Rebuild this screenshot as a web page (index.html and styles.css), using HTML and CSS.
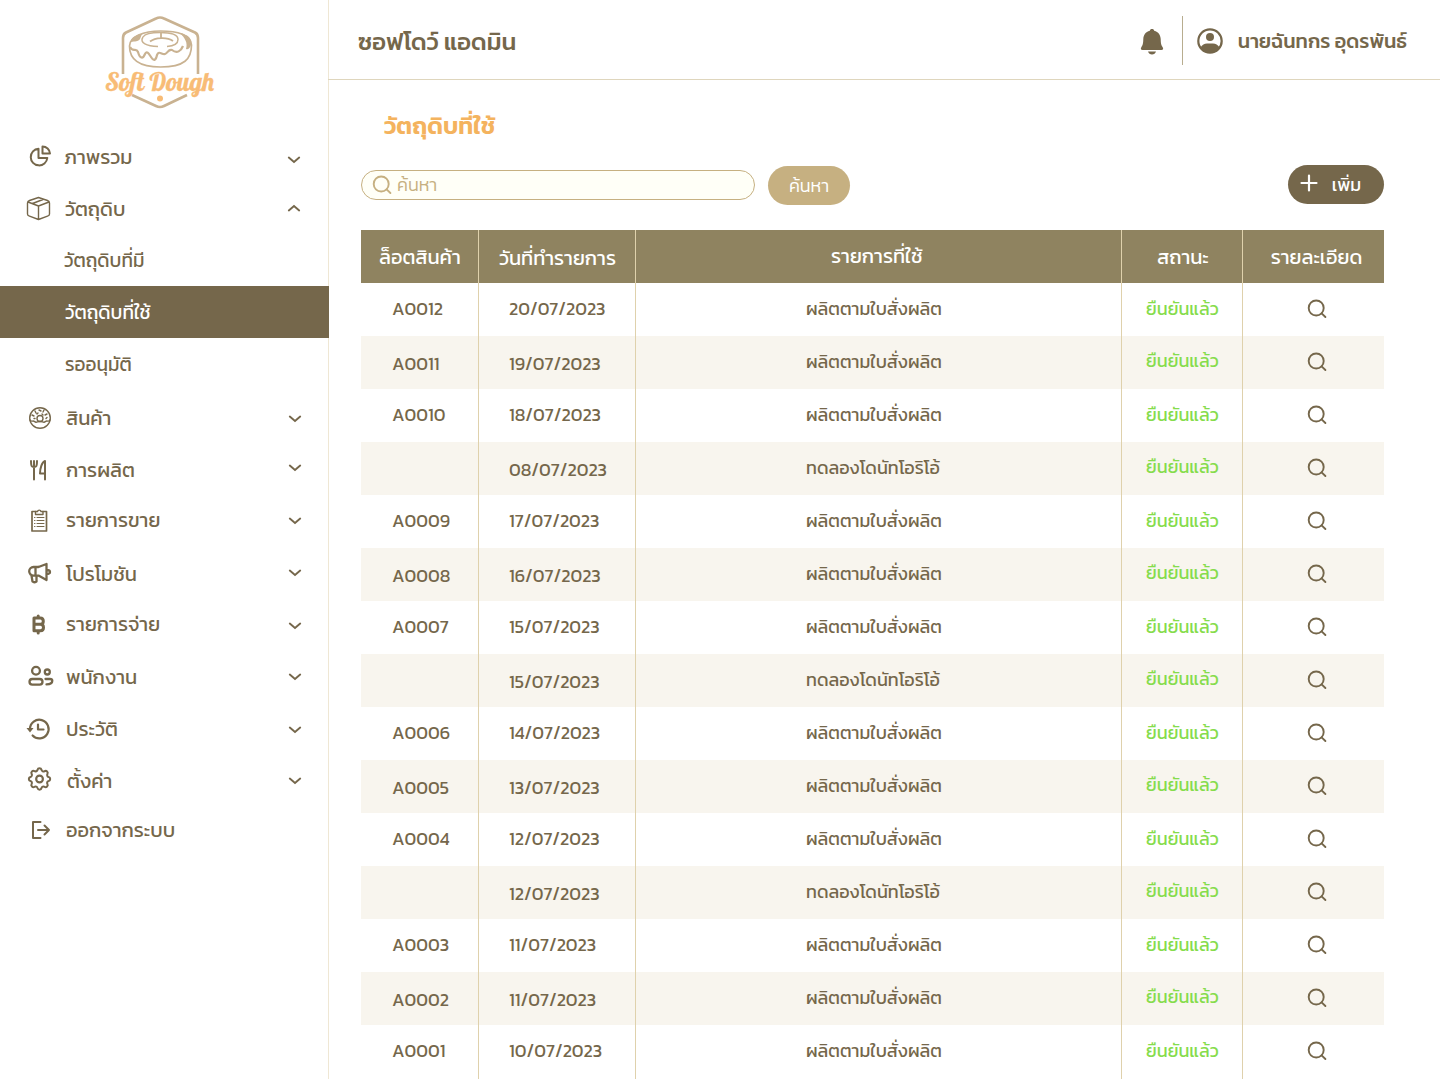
FILE: index.html
```html
<!DOCTYPE html>
<html lang="th">
<head>
<meta charset="utf-8">
<title>ซอฟโดว์ แอดมิน</title>
<link rel="stylesheet" href="styles.css">
</head>
<body>
<svg class="symbols" aria-hidden="true">
  <symbol id="chevron" viewBox="0 0 14 8"><path d="M1.800 1.600 7 6l5.200-4.400" /></symbol>
  <symbol id="search" viewBox="0 0 20 20"><circle cx="9.200" cy="9" r="7.500"/><path d="m14.600 14.400 3.800 3.600"/></symbol>
</svg>
<div class="app">
  <aside class="sidebar">
    <svg class="logo" viewBox="0 0 120 104">
      <g fill="none" stroke="#c9b291" stroke-width="2.600">
        <path d="M23 61V25q0-4 3-5.500L56 5.500q4-2 8 0l31 14q3 1.500 3 5.500v36"/>
        <path d="M32 82 56 93q4 2 8 0l23-11"/>
        <path stroke-width="1.700" d="M29.500 33c0-9 14-15 31-15s31 4 31 14c0 14-7 22-31 22-22 0-31-8-31-21Z"/>
        <path stroke-width="2.200" d="M30 34c3 6 6 0 8 5 2 7 5 7 7 2 2-4 4 0 6 3 3 5 5 3 6-2 2-5 5 0 8-1s3-5 7-4c5 4 9 1 11-4"/>
        <path stroke-width="1.500" d="M43 24c-4 6 4 9 15 9.500M67 33.500c7-.5 11-2.500 11-7 0-6-9-7-18-7-8 0-15 1-17 4.500"/>
        <path stroke-width="1.800" d="M50 28.500c5-4 17-5 23-.5M61 19v6"/>
      </g>
      <path fill="#c9b291" d="M80 20c9 2 12 6 11 12-1 3-3 5-5 4 2-6-1-11-6-16ZM42 21c-7 1-11 4-11 8 4-1 7 0 9-3Z"/>
      <text x="59.500" y="78" textLength="109" lengthAdjust="spacingAndGlyphs">Soft Dough</text>
      <circle cx="60" cy="85.500" r="3" fill="#f8bc76"/>
    </svg>
    <nav class="menu">
      <a class="item overview"><svg class="ico" viewBox="0 0 26 26"><path d="M12.500 4.800A8.300 8.300 0 1 0 21.300 14H12.500ZM16.500 2.500V9.500h7.500A7.500 7.500 0 0 0 16.500 2.500Z"/></svg><span>ภาพรวม</span><svg class="chev"><use href="#chevron"/></svg></a>
      <a class="item material"><svg class="ico thin" viewBox="0 0 26 26"><path d="m12.500 2.500 9 3q2 .7 2 2.500v11q0 1.500-2 2.200L12.500 24.500l-9-3.300q-2-.7-2-2.200V8q0-1.800 2-2.500ZM2 7l10.500 4L23 7M12.500 11v13.500M6.500 8.500l10.500-4"/></svg><span>วัตถุดิบ</span><svg class="chev up"><use href="#chevron"/></svg></a>
      <a class="item sub stock"><span>วัตถุดิบที่มี</span></a>
      <a class="item sub active"><span>วัตถุดิบที่ใช้</span></a>
      <a class="item sub pending"><span>รออนุมัติ</span></a>
      <a class="item product"><svg class="ico thin" viewBox="0 0 26 26"><circle cx="14" cy="13" r="10.300"/><path d="M4 15c1 2.500 3 0 4.500 1.500 2 2 3-.5 5.500 0 2.500-.5 3.500 2 5.500 0C21 15 23 17.500 24 15"/><circle cx="14" cy="13.500" r="3"/><path d="m6 10 2 1M9 6l1 2M13 5l2 1M18 5l-1 2M21 9l-2 1M12 8l-1 1M16 9l1 1M8 13.500h1M20 13.500l1-1"/></svg><span>สินค้า</span><svg class="chev"><use href="#chevron"/></svg></a>
      <a class="item produce"><svg class="ico" viewBox="0 0 26 26"><path d="M8 4v18.500M5 4c0 5 .5 6 3 6s3-1 3-6M19 22.500V4c-3 1-5 7-5 12.500h5"/></svg><span>การผลิต</span><svg class="chev"><use href="#chevron"/></svg></a>
      <a class="item sales"><svg class="ico thin" viewBox="0 0 26 26"><path stroke-width="1.700" d="M9.500 4.500H6V24h14.500V4.500H17"/><path d="M9.500 4.500V7.500h7.500v-3h-2a1.800 1.800 0 0 0-3.500 0Z"/><path stroke-width="1" d="M8.500 10.500h.5M11 10.500h7M8.500 13.500h.5M11 13.500h7M8.500 16.500h.5M11 16.500h7M8.500 19.500h.5M11 19.500h7"/></svg><span>รายการขาย</span><svg class="chev"><use href="#chevron"/></svg></a>
      <a class="item promo"><svg class="ico" viewBox="0 0 26 26"><path stroke-width="2.300" d="M12.500 7H7.500a4.300 4.300 0 0 0 0 8.600h5L20.500 20V4l-8 3M9.500 7v8.600M5.500 15.600l1 5.900q1.500 1.500 4 0v-5.900M20.500 10q3.500 0 3.500 2t-3.500 2"/></svg><span>โปรโมชัน</span><svg class="chev"><use href="#chevron"/></svg></a>
      <a class="item expense"><svg class="ico bold" viewBox="0 0 26 26"><path d="M8 6h6.300q3 0 3 3.200 0 3-3 3H8ZM8 12.200h6.500q3 .2 3 3.300t-3 3.300H8ZM12.200 4v1M12.200 20v1"/></svg><span>รายการจ่าย</span><svg class="chev"><use href="#chevron"/></svg></a>
      <a class="item staff"><svg class="ico wide" viewBox="0 0 28 26"><circle cx="10" cy="7.700" r="3.900"/><circle cx="21.300" cy="9" r="2.500"/><rect x="3.500" y="16" width="13" height="5.700" rx="2.850"/><path d="M19.500 16h4.500q2.300 0 2.300 1.800 0 3.600-5.800 3.600"/></svg><span>พนักงาน</span><svg class="chev"><use href="#chevron"/></svg></a>
      <a class="item history"><svg class="ico" viewBox="0 0 26 26"><path stroke-width="2.200" d="M4 13a9.300 9.300 0 1 1 2.600 6.500M12 8.500v5h5.500"/><path class="solid" d="M.5 12h7L4 16.500Z"/></svg><span>ประวัติ</span><svg class="chev"><use href="#chevron"/></svg></a>
      <a class="item settings"><svg class="ico" viewBox="0 0 24 24"><path transform="translate(-.6 -1.100) scale(1.090)" stroke-width="1.700" d="M10.300 4.300c.4-1.800 2.900-1.800 3.400 0a1.700 1.700 0 0 0 2.600 1.100c1.500-.9 3.300.8 2.400 2.400a1.700 1.700 0 0 0 1 2.500c1.800.4 1.800 2.900 0 3.400a1.700 1.700 0 0 0-1 2.600c.9 1.500-.9 3.300-2.400 2.400a1.700 1.700 0 0 0-2.600 1c-.4 1.800-2.900 1.800-3.400 0a1.700 1.700 0 0 0-2.600-1c-1.500.9-3.300-.9-2.400-2.400a1.700 1.700 0 0 0-1-2.600c-1.800-.4-1.800-2.900 0-3.400a1.700 1.700 0 0 0 1-2.600c-.9-1.500.9-3.300 2.400-2.400 1 .6 2.300.1 2.600-1Z"/><circle cx="12.500" cy="12" r="3.100"/></svg><span>ตั้งค่า</span><svg class="chev"><use href="#chevron"/></svg></a>
      <a class="item logout"><svg class="ico" viewBox="0 0 26 26"><path d="M14.500 5H7v16h7.500M12 13h11M18.500 8.500 23 13l-4.500 4.500"/></svg><span>ออกจากระบบ</span></a>
    </nav>
  </aside>
  <main class="main">
    <header class="topbar">
      <h1>ซอฟโดว์ แอดมิน</h1>
      <svg class="bell" viewBox="0 0 24 27"><path d="M12 1c1.300 0 2 .7 2.200 1.700C18.500 3.700 20.500 7 20.700 11c.1 4.500.5 6 2.100 8.500.8 1.400.2 2.500-1.300 2.500h-19C1 22 .4 20.900 1.200 19.500 2.800 17 3.200 15.500 3.300 11 3.500 7 5.500 3.700 9.800 2.700 10 1.700 10.700 1 12 1ZM8 23.500h8q-1 3-4 3t-4-3Z"/></svg>
      <div class="user">
        <svg class="avatar" viewBox="0 0 26 26"><circle cx="13" cy="13" r="11.700" fill="none" stroke="currentColor" stroke-width="2.200"/><circle cx="13" cy="9" r="4"/><path d="M3.500 19.500Q6 15.500 10 15.500h6q4 0 6.500 4Q19 25 13 25t-9.500-5.500Z"/></svg>
        <span>นายฉันทกร อุดรพันธ์</span>
      </div>
    </header>
    <section class="content">
      <h2>วัตถุดิบที่ใช้</h2>
      <div class="toolbar">
        <div class="field"><svg><use href="#search"/></svg><span>ค้นหา</span></div>
        <button class="btn find">ค้นหา</button>
        <button class="btn add"><svg viewBox="0 0 18 18"><path d="M9 1.500v15M1.500 9h15"/></svg><span>เพิ่ม</span></button>
      </div>
      <div class="table">
        <div class="row head"><div>ล็อตสินค้า</div><div>วันที่ทำรายการ</div><div>รายการที่ใช้</div><div>สถานะ</div><div>รายละเอียด</div></div>
        <div class="row"><div>A0012</div><div>20/07/2023</div><div>ผลิตตามใบสั่งผลิต</div><div>ยืนยันแล้ว</div><div><svg><use href="#search"/></svg></div></div>
        <div class="row"><div>A0011</div><div>19/07/2023</div><div>ผลิตตามใบสั่งผลิต</div><div>ยืนยันแล้ว</div><div><svg><use href="#search"/></svg></div></div>
        <div class="row"><div>A0010</div><div>18/07/2023</div><div>ผลิตตามใบสั่งผลิต</div><div>ยืนยันแล้ว</div><div><svg><use href="#search"/></svg></div></div>
        <div class="row"><div></div><div>08/07/2023</div><div>ทดลองโดนัทโอริโอ้</div><div>ยืนยันแล้ว</div><div><svg><use href="#search"/></svg></div></div>
        <div class="row"><div>A0009</div><div>17/07/2023</div><div>ผลิตตามใบสั่งผลิต</div><div>ยืนยันแล้ว</div><div><svg><use href="#search"/></svg></div></div>
        <div class="row"><div>A0008</div><div>16/07/2023</div><div>ผลิตตามใบสั่งผลิต</div><div>ยืนยันแล้ว</div><div><svg><use href="#search"/></svg></div></div>
        <div class="row"><div>A0007</div><div>15/07/2023</div><div>ผลิตตามใบสั่งผลิต</div><div>ยืนยันแล้ว</div><div><svg><use href="#search"/></svg></div></div>
        <div class="row"><div></div><div>15/07/2023</div><div>ทดลองโดนัทโอริโอ้</div><div>ยืนยันแล้ว</div><div><svg><use href="#search"/></svg></div></div>
        <div class="row"><div>A0006</div><div>14/07/2023</div><div>ผลิตตามใบสั่งผลิต</div><div>ยืนยันแล้ว</div><div><svg><use href="#search"/></svg></div></div>
        <div class="row"><div>A0005</div><div>13/07/2023</div><div>ผลิตตามใบสั่งผลิต</div><div>ยืนยันแล้ว</div><div><svg><use href="#search"/></svg></div></div>
        <div class="row"><div>A0004</div><div>12/07/2023</div><div>ผลิตตามใบสั่งผลิต</div><div>ยืนยันแล้ว</div><div><svg><use href="#search"/></svg></div></div>
        <div class="row"><div></div><div>12/07/2023</div><div>ทดลองโดนัทโอริโอ้</div><div>ยืนยันแล้ว</div><div><svg><use href="#search"/></svg></div></div>
        <div class="row"><div>A0003</div><div>11/07/2023</div><div>ผลิตตามใบสั่งผลิต</div><div>ยืนยันแล้ว</div><div><svg><use href="#search"/></svg></div></div>
        <div class="row"><div>A0002</div><div>11/07/2023</div><div>ผลิตตามใบสั่งผลิต</div><div>ยืนยันแล้ว</div><div><svg><use href="#search"/></svg></div></div>
        <div class="row"><div>A0001</div><div>10/07/2023</div><div>ผลิตตามใบสั่งผลิต</div><div>ยืนยันแล้ว</div><div><svg><use href="#search"/></svg></div></div>
      </div>
    </section>
  </main>
</div>
</body>
</html>
```

FILE: styles.css
```css
* { box-sizing: border-box; }
body { margin: 0; font-family: Kanit, "Noto Sans Thai", "Noto Sans", sans-serif; font-weight: 400; color: #75674b; background: #fff; }
.symbols { display: none; }
.app { display: flex; height: 1079px; overflow: hidden; }

.sidebar { width: 329px; flex: none; border-right: 1px solid #efe7d4; }
.logo { display: block; width: 120px; height: 104px; margin: 13px 0 0 100px; }
.logo text { font: 26px Lobster, cursive; fill: #f8bc76; stroke: #f8bc76; stroke-width: .3; text-anchor: middle; }
.menu { padding-top: 13px; }
.item { display: flex; align-items: center; height: 52px; padding: 0 27px 0 26px; font-size: 20px; line-height: 30px; }
.item span { flex: 1; margin: 2px 0 0 13px; }
.item.sub { padding-left: 65px; font-size: 19px; }
.item.sub span { margin-left: 0; }
.item.stock { padding-left: 64px; }
.item.active { width: 329px; background: #75674b; color: #fff; }
.ico { width: 26px; height: 26px; fill: none; stroke: currentColor; stroke-width: 2; stroke-linejoin: round; stroke-linecap: round; }
.ico.thin { stroke-width: 1.400; }
.ico.bold { stroke-width: 3; }
.ico.wide { width: 28px; margin-right: -2px; stroke-width: 2.300; }
.ico .solid { fill: currentColor; stroke: none; }
.chev { width: 14px; height: 8px; fill: none; stroke: currentColor; stroke-width: 1.900; stroke-linecap: round; }
.chev.up { transform: rotate(180deg); }
.overview .ico { margin-top: 2px; }
.overview .chev { margin-top: 7px; }
.overview span { margin-left: 12px; }
.product, .produce, .sales, .promo, .expense, .staff, .history, .settings, .logout { padding-right: 26px; }
.product span, .produce span, .sales span, .promo span, .expense span, .staff span, .history span, .logout span { margin-left: 14px; }
.settings span { margin-left: 15px; }
.product, .produce { padding-top: 4px; }
.product span, .produce span { margin-top: 0; }
.product .chev { margin-top: 1px; }
.produce .chev { margin-top: -5px; }
.promo .ico, .expense .ico, .history .ico { margin-top: 2px; }
.sales span, .expense span { margin-top: 0; }
.promo span { margin-top: 4px; }
.sales .chev, .promo .chev, .staff .chev, .settings .chev { margin-top: 1px; }
.expense .chev, .history .chev { margin-top: 3px; }
.settings .ico { margin-top: -2px; }
.logout { padding-bottom: 4px; }
.logout span { margin-top: 0; }

.main { flex: 1; min-width: 0; }
.topbar { display: flex; align-items: center; height: 80px; margin-left: -1px; padding: 2px 33px 0 30px; border-bottom: 1px solid #dfd6bd; }
h1 { flex: 1; margin: 2px 0 0; font-size: 24px; font-weight: 500; }
.bell { width: 24px; height: 27px; margin: 1px 18px 0 0; fill: currentColor; }
.user { display: flex; align-items: center; height: 49px; padding-left: 14px; border-left: 1px solid #b8ad8f; font-size: 20px; font-weight: 500; }
.avatar { width: 26px; height: 26px; margin-right: 15px; fill: currentColor; }

.content { padding: 28px 56px 0 32px; }
h2 { margin: 0 0 0 23px; font-size: 24px; line-height: 36px; font-weight: 600; color: #f4b35e; }
.toolbar { display: flex; align-items: center; height: 39px; margin-top: 22px; }
.field { display: flex; align-items: center; width: 394px; height: 30px; margin-top: -2px; padding-left: 10px; border: 1px solid #c6b081; border-radius: 15px; background: #fffff7; color: #c6b081; font-size: 18px; font-weight: 300; }
.field svg { width: 20px; height: 20px; margin-right: 5px; }
.table svg { width: 20px; height: 20px; }
.field svg, .table svg { fill: none; stroke: currentColor; stroke-width: 1.900; stroke-linecap: round; }
.btn { display: flex; align-items: center; justify-content: center; height: 39px; border: 0; border-radius: 20px; color: #fff; font: 300 18px Kanit, "Noto Sans Thai", sans-serif; }
.find { width: 82px; margin-left: 13px; background: #c6b081; }
.add { width: 96px; margin: -2px 0 0 auto; background: #75674b; padding: 0 11px 0 0; font-weight: 400; }
.add svg { width: 18px; height: 18px; margin: -3px 14px 0 0; fill: none; stroke: currentColor; stroke-width: 2.200; stroke-linecap: round; }

.table { margin-top: 25px; }
.row { display: grid; grid-template-columns: 118px 157px 486px 121px 141px; height: 53px; font-size: 18px; line-height: 27px; }
.row > div { display: flex; align-items: center; padding-bottom: 2px; border-right: 1px solid #dfd1ac; }
.row > div:last-child { border-right: 0; justify-content: center; padding-left: 6px; }
.row > div:nth-child(1) { padding-left: 31px; }
.row > div:nth-child(2) { padding-left: 30px; }
.row > div:nth-child(3) { padding-left: 170px; }
.row > div:nth-child(4) { padding-left: 24px; color: #86dc4c; }
.row:nth-child(odd) { background: #f8f5ee; }
.row:nth-child(odd) > div:nth-child(-n+2) { padding-top: 2px; padding-bottom: 0; }
.row:nth-child(odd) > div:nth-child(4) { padding-bottom: 4px; }
.row:last-child { height: 54px; }
.row:last-child > div { padding-bottom: 3px; }
.row.head { background: #8f8360; color: #fff; font-size: 20px; }
.row.head > div:nth-child(1) { padding: 2px 0 0 18px; }
.row.head > div:nth-child(2) { padding: 3px 0 0 20px; }
.row.head > div:nth-child(3) { padding: 0 0 0 195px; }
.row.head > div:nth-child(4) { padding: 2px 0 0 35px; color: #fff; }
.row.head > div:nth-child(5) { padding: 2px 0 0 6px; }
```
